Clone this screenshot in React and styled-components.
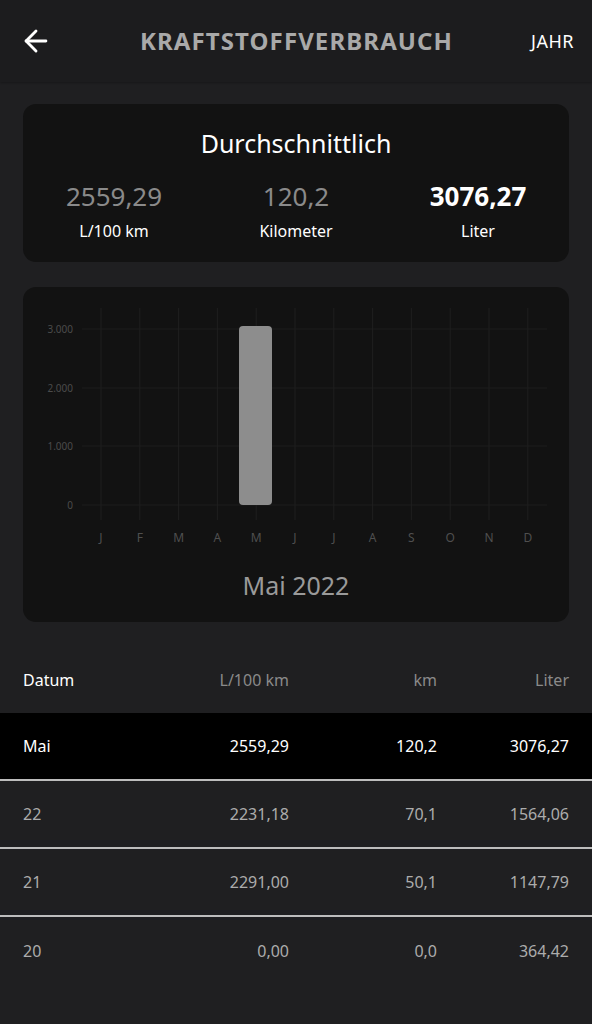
import React from "react";
import styled, { createGlobalStyle } from "styled-components";
import { ArrowLeft } from "lucide-react";

const Global = createGlobalStyle`
  html, body { margin: 0; padding: 0; background: #1f1f21; }
  body { font-family: "Noto Sans", "Open Sans", sans-serif; color: #fff; }
  * { box-sizing: border-box; }
`;

const Page = styled.div`
  width: 592px;
  min-height: 1024px;
  background: #1f1f21;
  display: flex;
  flex-direction: column;
`;

const Header = styled.header`
  height: 82px;
  background: #1c1c1e;
  display: grid;
  grid-template-columns: 80px 1fr 80px;
  align-items: center;
  padding: 0 18px 0 19px;
  box-shadow: 0 1px 2px rgba(0, 0, 0, 0.25);
`;

const BackButton = styled.button`
  background: none;
  border: none;
  padding: 0;
  width: 34px;
  height: 34px;
  display: flex;
  align-items: center;
  justify-content: center;
  color: #fff;
`;

const Title = styled.h1`
  margin: 0 0 2px;
  text-align: center;
  font-size: 24px;
  font-weight: 700;
  color: #a9a9a9;
  letter-spacing: 1.1px;
  white-space: nowrap;
`;

const PeriodLink = styled.span`
  justify-self: end;
  font-size: 18px;
  letter-spacing: 0.5px;
  color: #fff;
`;

const Content = styled.main`
  display: flex;
  flex-direction: column;
  gap: 25px;
  padding: 22px 23px 0;
`;

const Card = styled.section`
  background: #121212;
  border-radius: 13px;
  height: ${(p) => p.$h}px;
  display: flex;
  flex-direction: column;
  align-items: center;
`;

const CardTitle = styled.div`
  margin-top: 23px;
  font-size: 25px;
  color: #fff;
  line-height: 32px;
`;

const Stats = styled.div`
  width: 100%;
  margin-top: 22px;
  display: grid;
  grid-template-columns: 1fr 1fr 1fr;
`;

const Stat = styled.div`
  display: flex;
  flex-direction: column;
  align-items: center;
  gap: 10px;
`;

const StatValue = styled.div`
  font-size: 26px;
  line-height: 30px;
  color: ${(p) => (p.$strong ? "#fff" : "#8a8a8a")};
  font-weight: ${(p) => (p.$strong ? 700 : 400)};
`;

const StatLabel = styled.div`
  font-size: 16px;
  line-height: 20px;
  color: #fff;
`;

const ChartSvg = styled.svg`
  display: block;
  width: 546px;
  height: 270px;
`;

const ChartCaption = styled.div`
  margin-top: 13px;
  font-size: 25px;
  color: #9a9a9a;
  line-height: 30px;
`;

const Table = styled.div`
  margin-top: 25px;
  display: flex;
  flex-direction: column;
`;

const Row = styled.div`
  display: grid;
  grid-template-columns: 120px 146px 148px 132px;
  align-items: center;
  height: ${(p) => (p.$head ? 66 : 68)}px;
  padding: 0 23px;
  background: ${(p) => (p.$active ? "#000" : "transparent")};
  border-bottom: ${(p) => (p.$line ? "2px solid #bdbdbd" : "none")};
  font-size: 16px;
`;

const Cell = styled.div`
  text-align: ${(p) => (p.$left ? "left" : "right")};
  color: ${(p) => p.$color};
`;

const months = ["J", "F", "M", "A", "M", "J", "J", "A", "S", "O", "N", "D"];
const yTicks = [
  { label: "3.000", y: 42 },
  { label: "2.000", y: 101 },
  { label: "1.000", y: 159 },
  { label: "0", y: 218 },
];

function Chart() {
  const x0 = 78;
  const step = 38.8;
  return (
    <ChartSvg viewBox="0 0 546 270">
      {yTicks.map((t) => (
        <g key={t.label}>
          <line x1="59" x2="524" y1={t.y} y2={t.y} stroke="#1d1d1d" strokeWidth="1" />
          <text x="50" y={t.y + 4} textAnchor="end" fontSize="10" fill="#4b4b4b" fontFamily="Noto Sans, sans-serif">
            {t.label}
          </text>
        </g>
      ))}
      {months.map((m, i) => {
        const x = x0 + i * step;
        return (
          <g key={i}>
            <line x1={x} x2={x} y1="21" y2="233" stroke="#1f1f1f" strokeWidth="1" />
            <text x={x} y="255" textAnchor="middle" fontSize="12" fill="#4f4f4f" fontFamily="Noto Sans, sans-serif">
              {m}
            </text>
          </g>
        );
      })}
      <rect x="216" y="39" width="33" height="179" rx="4" fill="#8d8d8d" />
    </ChartSvg>
  );
}

const rows = [
  { d: "Mai", a: "2559,29", b: "120,2", c: "3076,27", active: true },
  { d: "22", a: "2231,18", b: "70,1", c: "1564,06" },
  { d: "21", a: "2291,00", b: "50,1", c: "1147,79" },
  { d: "20", a: "0,00", b: "0,0", c: "364,42", last: true },
];

export default function App() {
  return (
    <Page>
      <Global />
      <Header>
        <BackButton aria-label="Zurück">
          <ArrowLeft size={34} strokeWidth={2} />
        </BackButton>
        <Title>KRAFTSTOFFVERBRAUCH</Title>
        <PeriodLink>JAHR</PeriodLink>
      </Header>
      <Content>
        <Card $h={158}>
          <CardTitle>Durchschnittlich</CardTitle>
          <Stats>
            <Stat>
              <StatValue>2559,29</StatValue>
              <StatLabel>L/100 km</StatLabel>
            </Stat>
            <Stat>
              <StatValue>120,2</StatValue>
              <StatLabel>Kilometer</StatLabel>
            </Stat>
            <Stat>
              <StatValue $strong>3076,27</StatValue>
              <StatLabel>Liter</StatLabel>
            </Stat>
          </Stats>
        </Card>
        <Card $h={335}>
          <Chart />
          <ChartCaption>Mai 2022</ChartCaption>
        </Card>
      </Content>
      <Table>
        <Row $head>
          <Cell $left $color="#fff">Datum</Cell>
          <Cell $color="#8a8a8a">L/100 km</Cell>
          <Cell $color="#8a8a8a">km</Cell>
          <Cell $color="#8a8a8a">Liter</Cell>
        </Row>
        {rows.map((r) => {
          const color = r.active ? "#fff" : "#acacac";
          return (
            <Row key={r.d} $active={r.active} $line={!r.last}>
              <Cell $left $color={color}>{r.d}</Cell>
              <Cell $color={color}>{r.a}</Cell>
              <Cell $color={color}>{r.b}</Cell>
              <Cell $color={color}>{r.c}</Cell>
            </Row>
          );
        })}
      </Table>
    </Page>
  );
}
